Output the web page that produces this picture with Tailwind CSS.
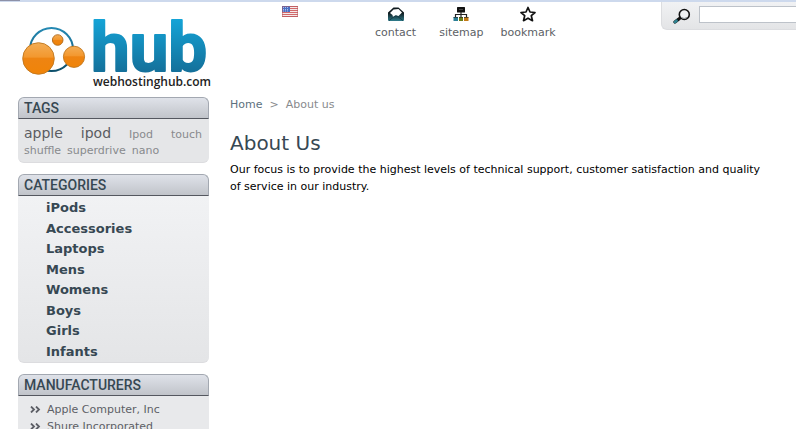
<!DOCTYPE html>
<html lang="en">
<head>
  <meta charset="UTF-8" />
  <meta name="viewport" content="width=device-width, initial-scale=1.0" />
  <title>About Us - Web Hosting Hub</title>
  <script src="https://cdn.jsdelivr.net/npm/@tailwindcss/browser@4"></script>
</head>
<body class="h-screen overflow-hidden bg-white font-['DejaVu_Sans',sans-serif] text-[11px] text-[#5d5f66]">
  <div class="h-[2px] bg-[#cdd9ed]"><div class="h-px w-5 bg-[#8d91a8]"></div></div>

  <div class="flex gap-[21px] pl-[18px]">
    <!-- left column -->
    <aside class="w-[191px] shrink-0">
      <a href="#" class="block h-[95px]" aria-label="webhostinghub.com">
        <svg class="h-[95px] w-[194px]" viewBox="18 2 194 95">
          <defs>
            <linearGradient id="blue" gradientUnits="userSpaceOnUse" x1="0" y1="20" x2="0" y2="73">
              <stop offset="0" stop-color="#14a3d6" />
              <stop offset="1" stop-color="#146f99" />
            </linearGradient>
            <linearGradient id="orange" x1="0" y1="0" x2="0" y2="1">
              <stop offset="0" stop-color="#f3ad55" />
              <stop offset="0.45" stop-color="#f3982f" />
              <stop offset="0.5" stop-color="#ee8412" />
              <stop offset="1" stop-color="#f08408" />
            </linearGradient>
            <linearGradient id="ring" x1="0" y1="0" x2="0" y2="1">
              <stop offset="0" stop-color="#2589b3" />
              <stop offset="1" stop-color="#0d4f6b" />
            </linearGradient>
          </defs>
          <circle cx="51.500" cy="49.500" r="21.500" fill="none" stroke="url(#ring)" stroke-width="2" />
          <circle cx="38.500" cy="58.500" r="15.800" fill="url(#orange)" stroke="#c0771f" stroke-width="0.900" />
          <circle cx="74" cy="56.800" r="10.600" fill="url(#orange)" stroke="#c0771f" stroke-width="0.900" />
          <circle cx="57.700" cy="40" r="5.300" fill="url(#orange)" stroke="#b06a1c" stroke-width="0.900" />
          <text x="91" y="71" font-family="Roboto, sans-serif" font-weight="700" font-size="69" fill="url(#blue)" stroke="url(#blue)" stroke-width="2" stroke-linejoin="round">hub</text>
          <text x="93" y="86" font-family="Open Sans, sans-serif" font-weight="600" font-size="12" fill="#222222">webhostinghub.com</text>
        </svg>
      </a>

      <section class="mb-[11px]">
        <h2 class="h-[22px] rounded-t-md border border-b-[#54575f] border-[#a3a8b1] bg-linear-to-b from-[#dfe2e9] to-[#c1c4ca] px-[5px] font-[Roboto,sans-serif] text-sm leading-5 font-medium text-[#374853]">TAGS</h2>
        <div class="rounded-b-md border-b border-[#dcdcdf] bg-[#e5e6e8] pt-1 pr-[7px] pb-1 pl-[6px] text-[#888a8d]">
          <p class="flex h-[21px] items-baseline justify-between">
            <a href="#" class="text-sm leading-5 text-[#5b5c61]">apple</a>
            <a href="#" class="text-sm leading-5 text-[#5b5c61]">ipod</a>
            <a href="#">Ipod</a>
            <a href="#">touch</a>
          </p>
          <p class="flex gap-[6px] leading-[14px]">
            <a href="#">shuffle</a>
            <a href="#">superdrive</a>
            <a href="#">nano</a>
          </p>
        </div>
      </section>

      <section class="mb-[11px]">
        <h2 class="h-[22px] rounded-t-md border border-b-[#54575f] border-[#a3a8b1] bg-linear-to-b from-[#dfe2e9] to-[#c1c4ca] px-[5px] font-[Roboto,sans-serif] text-sm leading-5 font-medium text-[#374853]">CATEGORIES</h2>
        <ul class="grid min-h-[167px] auto-rows-fr items-center rounded-b-md border-b border-[#dcdcdf] bg-linear-to-b from-[#f1f2f4] to-[#e4e5e7] pt-[2px] pl-7 text-[13px] leading-5 font-bold text-[#374853]">
          <li><a href="#">iPods</a></li>
          <li><a href="#">Accessories</a></li>
          <li><a href="#">Laptops</a></li>
          <li><a href="#">Mens</a></li>
          <li><a href="#">Womens</a></li>
          <li><a href="#">Boys</a></li>
          <li><a href="#">Girls</a></li>
          <li><a href="#">Infants</a></li>
        </ul>
      </section>

      <section>
        <h2 class="h-[22px] rounded-t-md border border-b-[#54575f] border-[#a3a8b1] bg-linear-to-b from-[#dfe2e9] to-[#c1c4ca] px-[5px] font-[Roboto,sans-serif] text-sm leading-5 font-medium text-[#374853]">MANUFACTURERS</h2>
        <ul class="rounded-b-md bg-[#e8e9eb] px-3 py-[5px] leading-[17px]">
          <li class="flex items-center gap-[6px]">
            <svg class="h-[7px] w-[11px]" viewBox="0 0 11 7" fill="none" stroke="#5d5f66" stroke-width="1.800"><path d="M1 .5l3 3-3 3M6 .5l3 3-3 3" /></svg>
            <a href="#">Apple Computer, Inc</a>
          </li>
          <li class="flex items-center gap-[6px]">
            <svg class="h-[7px] w-[11px]" viewBox="0 0 11 7" fill="none" stroke="#5d5f66" stroke-width="1.800"><path d="M1 .5l3 3-3 3M6 .5l3 3-3 3" /></svg>
            <a href="#">Shure Incorporated</a>
          </li>
        </ul>
      </section>
    </aside>

    <div class="min-w-0 flex-1">
      <!-- top links and search -->
      <header class="flex h-[95px] items-start pl-[52px]">
        <a href="#" class="mt-1 mr-[77px]" aria-label="English">
          <svg class="h-[11px] w-4" viewBox="0 0 16 11">
            <rect width="16" height="11" fill="#f4e9e9" />
            <path d="M0 .5h16M0 2.500h16M0 4.500h16M0 6.500h16M0 8.500h16M0 10.500h16" stroke="#d2696b" />
            <rect width="8" height="6" fill="#4a6fc4" />
            <path d="M1 1.500h6M1 3.500h6M1 5h6" stroke="#b8c8ee" stroke-dasharray="1 1" stroke-width="0.900" />
            <rect x="0.500" y="0.500" width="15" height="10" fill="none" stroke="#b0555c" stroke-opacity="0.500" />
          </svg>
        </a>
        <nav class="flex gap-[23px] leading-4">
          <a href="#" class="flex flex-col items-center gap-[2px] pt-1">
            <svg class="mb-px h-4 w-4" viewBox="0 0 16 16">
              <defs><linearGradient id="env" x1="0" y1="0" x2="0" y2="1"><stop offset="0.400" stop-color="#101a1e" /><stop offset="1" stop-color="#2f7d8c" /></linearGradient></defs>
              <path d="M0 6.500L5.500 1.500h5L16 6.500v7.500q0 1-1 1H1q-1 0-1-1z" fill="url(#env)" />
              <path d="M2 7l3.500-3.500 5-.5L14 6.500 10.500 10l-3-.5L5 11l-.5-2z" fill="#ffffff" />
              <path d="M1 14.500l6-4.500h2l6 4.500" fill="none" stroke="#163e48" />
            </svg>
            contact
          </a>
          <a href="#" class="flex flex-col items-center gap-[2px] pt-1">
            <svg class="mb-px h-4 w-4" viewBox="0 0 16 16">
              <rect x="4" y="1" width="8" height="5.500" rx="0.500" fill="#111111" />
              <path d="M6 3.500h4" stroke="#444444" />
              <path d="M8 6v5M2.500 11V8.500h11V11" fill="none" stroke="#222222" stroke-width="1.200" />
              <rect x="0.500" y="11" width="4.500" height="4" fill="#2c8098" />
              <rect x="6" y="11" width="4" height="4" fill="#6c7f18" />
              <rect x="11" y="11" width="4.500" height="4" fill="#c47a17" />
              <path d="M.5 11.500H5M6 11.500h4M11 11.500h4.500" stroke="#222222" stroke-opacity="0.600" />
            </svg>
            sitemap
          </a>
          <a href="#" class="-ml-[6px] flex flex-col items-center gap-[2px] pt-1">
            <svg class="mb-px h-4 w-4" viewBox="0 0 16 16">
              <path d="M8 1.500l2 4.500 5 .5-3.700 3.200 1.200 5L8 12.200l-4.500 2.500 1.200-5L1 6.500 6 6z" fill="#ffffff" stroke="#111111" stroke-width="1.700" stroke-linejoin="round" />
            </svg>
            bookmark
          </a>
        </nav>
        <form class="ml-auto flex h-7 w-[135px] shrink-0 items-start rounded-bl-md border-b border-l border-[#dcdde0] bg-linear-to-b from-[#f1f2f4] to-[#e3e4e6] pt-1 pl-[11px]">
          <button type="button" aria-label="Search" class="mt-[2px] mr-[8px]">
            <svg class="h-[17px] w-[18px]" viewBox="0 0 18 17" fill="none">
              <path d="M6.500 10.500L2 14" stroke="#111111" stroke-width="3.200" stroke-linecap="round" />
              <path d="M3.500 12.800L2 14" stroke="#2f8391" stroke-width="2.800" stroke-linecap="round" />
              <circle cx="11.300" cy="6.500" r="5" fill="#eef0f2" stroke="#111111" stroke-width="1.600" />
              <path d="M8.500 9.500q2.500 2 5.500 0" stroke="#8a9297" />
            </svg>
          </button>
          <input type="text" aria-label="Search" class="-mr-px h-[17px] min-w-0 flex-1 border border-[#bdc2c9] bg-white px-1 outline-none" />
        </form>
      </header>

      <main class="pr-6">
        <p class="flex gap-[7px] leading-4 text-[#888a8d]">
          <a href="#" class="text-[#5d717e]">Home</a>
          <span>&gt;</span>
          <span>About us</span>
        </p>
        <h1 class="mt-[18px] mb-[6px] text-xl leading-6 text-[#374853]">About Us</h1>
        <p class="leading-[17px] text-black">Our focus is to provide the highest levels of technical support, customer satisfaction and quality of service in our industry.</p>
      </main>
    </div>
  </div>
</body>
</html>
